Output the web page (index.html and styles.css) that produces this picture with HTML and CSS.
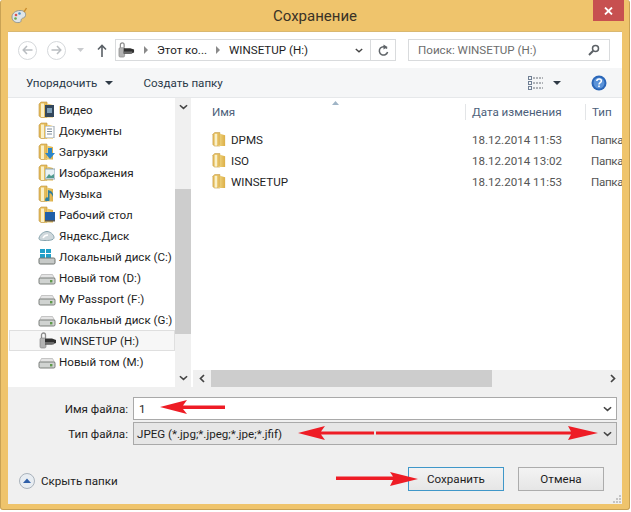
FILE: index.html
```html
<!DOCTYPE html>
<html lang="ru">
<head>
<meta charset="utf-8">
<title>Сохранение</title>
<link rel="stylesheet" href="styles.css">
</head>
<body>
<svg class="defs" width="0" height="0" aria-hidden="true">
  <defs>
    <linearGradient id="fg" x1="0" y1="0" x2="1" y2="0"><stop offset="0" stop-color="#f3dc8c"/><stop offset="1" stop-color="#dcae45"/></linearGradient>
    <symbol id="folder" viewBox="0 0 16 18">
      <path d="M1 3 3 1h6v15.500H3L1 15z" fill="#e5bd5c" stroke="#bf9642" stroke-width=".6"/>
      <path d="M9 2.500 15 4v12.500H6.500L9 15z" fill="url(#fg)"/>
      <path d="M4.500 2.500v13.500" stroke="#faf0c8" stroke-width="3"/>
    </symbol>
    <symbol id="hdd" viewBox="0 0 18 12">
      <path d="M3.500 1.500h11L17 6H1z" fill="#e4e4e4" stroke="#a8a8a8" stroke-width=".6"/>
      <rect x="1" y="5" width="16" height="6" rx="1.200" fill="#d0d3d1" stroke="#6f7471" stroke-width=".9"/>
      <rect x="12" y="7" width="2.400" height="2.400" fill="#5d9a4a"/>
    </symbol>
    <symbol id="usb" viewBox="0 0 18 18">
      <path d="M2.500 6V3a2 2 0 0 1 4 0v3" fill="none" stroke="#8c8c8c" stroke-width="1.300"/>
      <rect x="1" y="6" width="6" height="10" rx="1.400" fill="#b3b3b3" stroke="#7d7d7d" stroke-width=".6"/>
      <path d="M6 6.500h7l4 1.500v3l-4 1.500H6z" fill="#2f2f2f"/>
      <rect x="6" y="10" width="9" height="2.400" fill="#6b6b6b"/>
    </symbol>
    <symbol id="chev" viewBox="0 0 10 6">
      <path d="M1 1l4 3.600L9 1" fill="none" stroke="#444" stroke-width="1.700"/>
    </symbol>
  </defs>
</svg>

<div class="window">
  <header class="titlebar">
    <svg class="app-icon" width="18" height="18" viewBox="0 0 18 18">
      <path d="M2 10c0-4 4-6.500 8-6.500s6 2 5.500 5-3 2-4 3.500.5 3-2.500 3.500S2 14.500 2 10z" fill="#dfe5e8" stroke="#7f8a8e" stroke-width=".8"/>
      <circle cx="6" cy="8" r="1.300" fill="#d9534f"/><circle cx="9.500" cy="6.500" r="1.300" fill="#4a90c9"/><circle cx="5.500" cy="11.500" r="1.300" fill="#6aa84f"/>
      <path d="M14 5l2.500-4" stroke="#c98a2b" stroke-width="1.400"/>
    </svg>
    <span class="title-text">Сохранение</span>
    <button class="close" type="button" aria-label="Закрыть">
      <svg width="9" height="8" viewBox="0 0 9 8"><path d="M1 .5l7 7M8 .5l-7 7" stroke="#fff" stroke-width="1.800"/></svg>
    </button>
  </header>

  <div class="client">
    <div class="addressbar">
      <span class="nav-circle"><svg width="11" height="10" viewBox="0 0 11 10"><path d="M10.500 5H1.500M5 1 1.200 5 5 9" fill="none" stroke="#b9bdc1" stroke-width="1.500"/></svg></span>
      <span class="nav-circle next"><svg width="11" height="10" viewBox="0 0 11 10"><path d="M.5 5h9M6 1l3.800 4L6 9" fill="none" stroke="#b9bdc1" stroke-width="1.500"/></svg></span>
      <svg class="nav-drop" width="7" height="4" viewBox="0 0 7 4"><path d="M0 0h7L3.500 4z" fill="#c9cbce"/></svg>
      <svg class="nav-up" width="10" height="13" viewBox="0 0 10 13"><path d="M5 13V2M1 5.500 5 1.500l4 4" fill="none" stroke="#5a6066" stroke-width="1.600"/></svg>
      <div class="address">
        <svg class="crumb-icon" width="17" height="17"><use href="#usb"/></svg>
        <span class="crumb-arrow"></span>
        <span class="crumb">Этот ко...</span>
        <span class="crumb-arrow"></span>
        <span class="crumb">WINSETUP (H:)</span>
        <span class="grow"></span>
        <svg class="addr-chev" width="8" height="5"><use href="#chev"/></svg>
        <span class="refresh">
          <svg width="11" height="13" viewBox="0 0 11 13"><path d="M9 4.500A4.200 4.200 0 1 0 9.600 8" fill="none" stroke="#5f6468" stroke-width="1.500"/><path d="M5.500 0.500v5l4-2.500z" fill="#5f6468"/></svg>
        </span>
      </div>
      <div class="search">
        <span class="search-text">Поиск: WINSETUP (H:)</span>
        <svg width="12" height="12" viewBox="0 0 12 12"><circle cx="7.500" cy="4.500" r="3" fill="none" stroke="#5c6166" stroke-width="1.500"/><path d="M5.200 6.800 1 11" stroke="#5c6166" stroke-width="2"/></svg>
      </div>
    </div>

    <div class="toolbar">
      <span class="tool">Упорядочить</span>
      <span class="caret tool-caret"></span>
      <span class="tool create">Создать папку</span>
      <span class="grow"></span>
      <svg class="view-icon" width="15" height="14" viewBox="0 0 15 14">
        <g fill="none" stroke="#6f7f94"><rect x=".5" y=".5" width="3" height="3"/><rect x=".5" y="5.500" width="3" height="3"/><rect x=".5" y="10.500" width="3" height="3"/></g>
        <path d="M5 2h10M5 7h10M5 12h10" stroke="#6a7078" stroke-dasharray="2 1"/>
      </svg>
      <span class="caret view-caret"></span>
      <svg class="help" width="16" height="16" viewBox="0 0 16 16">
        <circle cx="8" cy="8" r="7.500" fill="#2a66b8"/><circle cx="8" cy="8" r="5.500" fill="#5b93d9"/>
        <path d="M5.800 6c.2-2.600 4.600-2.600 4.600 0 0 1.700-2.400 1.700-2.400 3.500" fill="none" stroke="#fff" stroke-width="1.500"/><rect x="7.200" y="10.500" width="1.600" height="1.600" fill="#fff"/>
      </svg>
    </div>

    <div class="main">
      <nav class="tree">
        <div class="tree-list">
          <div class="tree-row"><span class="tree-icon"><svg width="16" height="18"><use href="#folder"/></svg><svg class="badge" width="10" height="12" viewBox="0 0 10 12"><rect width="9" height="12" fill="#33475c"/><rect x="2" y="3" width="5" height="5" fill="#7fa0b8"/></svg></span>Видео</div>
          <div class="tree-row"><span class="tree-icon"><svg width="16" height="18"><use href="#folder"/></svg><svg class="badge" width="10" height="12" viewBox="0 0 10 12"><rect width="9" height="12" fill="#fff" stroke="#98a4ad"/><path d="M2 3h5M2 5.500h5M2 8h5" stroke="#7a8a98"/></svg></span>Документы</div>
          <div class="tree-row"><span class="tree-icon"><svg width="16" height="18"><use href="#folder"/></svg><svg class="badge" width="10" height="12" viewBox="0 0 10 12"><path d="M3 1h4v5h3l-5 6-5-6h3z" fill="#2c86c9"/></svg></span>Загрузки</div>
          <div class="tree-row"><span class="tree-icon"><svg width="16" height="18"><use href="#folder"/></svg><svg class="badge" width="10" height="12" viewBox="0 0 10 12"><rect y="1" width="10" height="10" fill="#e9f2f6" stroke="#8fa6b4"/><path d="M1 10 4 6l2 2 3-2v4z" fill="#4f9a8f"/></svg></span>Изображения</div>
          <div class="tree-row"><span class="tree-icon"><svg width="16" height="18"><use href="#folder"/></svg><svg class="badge" width="10" height="12" viewBox="0 0 10 12"><path d="M3 1v7.500a2.200 2.200 0 1 0 1.500 2V4c2 .5 3 2 3 4 1.500-3 0-6-4.500-7z" fill="#2f7fa0"/></svg></span>Музыка</div>
          <div class="tree-row"><span class="tree-icon"><svg width="16" height="18"><use href="#folder"/></svg><svg class="badge" width="10" height="12" viewBox="0 0 10 12"><rect y="2" width="10" height="8" fill="#1f5fa8"/><rect y="10" width="10" height="1.500" fill="#555"/></svg></span>Рабочий стол</div>
          <div class="tree-row"><span class="tree-icon"><svg width="17" height="12" viewBox="0 0 17 12"><path d="M1 8c1-4 5-6.500 8-6.500s7 3 7 6-6 3-9 3-6.500 0-6-2.500z" fill="#cfd8dc" stroke="#87a3ad"/><path d="M5 8c1-2 3-3 5-3" stroke="#fff" stroke-width="1.500" fill="none"/></svg></span>Яндекс.Диск</div>
          <div class="tree-row"><span class="tree-icon"><svg class="win" width="18" height="17" viewBox="0 0 18 17"><path d="M2 1h5v4H2zM8 1h5v4H8zM2 6h5v4H2zM8 6h5v4H8z" fill="#21a0c9"/><rect x="1" y="10" width="16" height="6" rx="1.200" fill="#c7cac8" stroke="#6f7471"/></svg></span>Локальный диск (C:)</div>
          <div class="tree-row"><span class="tree-icon"><svg class="hdd" width="18" height="12"><use href="#hdd"/></svg></span>Новый том (D:)</div>
          <div class="tree-row"><span class="tree-icon"><svg class="hdd" width="18" height="12"><use href="#hdd"/></svg></span>My Passport (F:)</div>
          <div class="tree-row"><span class="tree-icon"><svg class="hdd" width="18" height="12"><use href="#hdd"/></svg></span>Локальный диск (G:)</div>
          <div class="tree-row selected"><span class="tree-icon"><svg width="18" height="18"><use href="#usb"/></svg></span>WINSETUP (H:)</div>
          <div class="tree-row"><span class="tree-icon"><svg class="hdd" width="18" height="12"><use href="#hdd"/></svg></span>Новый том (M:)</div>
        </div>
      </nav>
      <div class="vscroll">
        <svg class="sb-up" width="9" height="6"><use href="#chev"/></svg>
        <div class="vthumb"></div>
        <span class="grow"></span>
        <svg width="9" height="6"><use href="#chev"/></svg>
      </div>
      <section class="files">
        <div class="file-head">
          <span class="col-name">Имя</span>
          <span class="col-date">Дата изменения</span>
          <span class="col-type">Тип</span>
          <svg class="sort" width="7" height="4" viewBox="0 0 7 4"><path d="M0 4 3.500 0 7 4z" fill="#9fb4c6"/></svg>
        </div>
        <div class="file-list">
          <div class="file-row"><span class="col-name"><svg width="14" height="17"><use href="#folder"/></svg>DPMS</span><span class="col-date">18.12.2014 11:53</span><span class="col-type">Папка</span></div>
          <div class="file-row"><span class="col-name"><svg width="14" height="17"><use href="#folder"/></svg>ISO</span><span class="col-date">18.12.2014 13:02</span><span class="col-type">Папка</span></div>
          <div class="file-row"><span class="col-name"><svg width="14" height="17"><use href="#folder"/></svg>WINSETUP</span><span class="col-date">18.12.2014 11:53</span><span class="col-type">Папка</span></div>
        </div>
        <div class="hscroll">
          <svg class="h-left" width="6" height="9" viewBox="0 0 6 9"><path d="M5 1 1.500 4.500 5 8" fill="none" stroke="#444" stroke-width="1.700"/></svg>
          <div class="hthumb"></div>
          <span class="grow"></span>
          <svg class="h-right" width="6" height="9" viewBox="0 0 6 9"><path d="M1 1l3.500 3.500L1 8" fill="none" stroke="#444" stroke-width="1.700"/></svg>
        </div>
      </section>
    </div>

    <div class="form">
      <div class="form-row">
        <label class="form-label">Имя файла:</label>
        <div class="field"><span>1</span><svg width="9" height="6"><use href="#chev"/></svg></div>
      </div>
      <div class="form-row type-row">
        <label class="form-label">Тип файла:</label>
        <div class="field select"><span>JPEG (*.jpg;*.jpeg;*.jpe;*.jfif)</span><svg width="9" height="6"><use href="#chev"/></svg></div>
      </div>
      <div class="actions">
        <span class="toggle"><svg width="16" height="16" viewBox="0 0 16 16"><circle cx="8" cy="8" r="7.500" fill="#e8edf2" stroke="#a9b2bb"/><path d="M4 10 8 5.500 12 10z" fill="#2f5fa8"/></svg>Скрыть папки</span>
        <span class="grow"></span>
        <button class="btn primary" type="button">Сохранить</button>
        <button class="btn" type="button">Отмена</button>
      </div>
    </div>
  </div>

  <svg class="grip" width="10" height="9" viewBox="0 0 10 9" aria-hidden="true">
    <path d="M7 0h2v2H7zM4 3h2v2H4zM7 3h2v2H7zM1 6h2v2H1zM4 6h2v2H4zM7 6h2v2H7z" fill="#c4c4c4"/>
  </svg>

  <svg class="arrows" width="631" height="512" viewBox="0 0 631 512" aria-hidden="true">
    <g fill="#ee1c25">
      <path d="M160 407 187 400 183 405.500H225V409H183L187 414z"/>
      <path d="M298 433 325 426 321 431.500H374V434.500H321L325 440z"/>
      <path d="M376 431.500H571L568 426 598 433 568 440 571 434.500H376z"/>
      <path d="M336 476.500H393L390 472 418 479 390 486 393 480H336z"/>
    </g>
  </svg>
</div>
</body>
</html>
```
FILE: styles.css
```css
* { box-sizing: border-box; }
html, body { margin: 0; padding: 0; background: #fff; }
body { width: 631px; height: 512px; overflow: hidden; font: 11.6px/16px Roboto, "Open Sans", sans-serif; color: #1e1e1e; }
.defs { position: absolute; }
.grow { flex: 1; }

.window { position: relative; width: 630px; height: 510px; background: #efc46c; border: 1px solid #c9a254; border-top: 0; border-radius: 3px; padding: 0 7px 5px; display: flex; flex-direction: column; }
.titlebar { height: 31px; flex: none; display: flex; align-items: center; justify-content: center; position: relative; }
.title-text { font-size: 15px; color: #3a3226; margin-top: 1px; }
.app-icon { position: absolute; left: 2px; top: 7px; }
.close { position: absolute; right: -2px; top: 0; width: 31px; height: 21px; border: 0; padding: 0; background: #c75050; display: flex; align-items: center; justify-content: center; }

.client { flex: 1; background: #f0f0f0; display: flex; flex-direction: column; min-height: 0; border: 1px solid #d9b871; border-width: 1px 0 0 0; }

.addressbar { height: 36px; flex: none; background: #fff; display: flex; align-items: center; padding-left: 10px; }
.nav-circle { width: 19px; height: 19px; border: 1px solid #d5d8db; border-radius: 50%; display: flex; align-items: center; justify-content: center; }
.nav-circle.next { margin-left: 10px; }
.nav-drop { margin-left: 11px; }
.nav-up { margin-left: 13px; }
.address { width: 281px; height: 22px; margin-left: 8px; border: 1px solid #d9dbdd; display: flex; align-items: center; padding-left: 2px; }
.crumb-icon { flex: none; }
.crumb-arrow { width: 0; height: 0; border-left: 4px solid #8a8a8a; border-top: 4px solid transparent; border-bottom: 4px solid transparent; margin: 0 9px; }
.crumb { white-space: nowrap; }
.addr-chev { margin-right: 7px; }
.refresh { width: 25px; height: 20px; border-left: 1px solid #d9dbdd; display: flex; align-items: center; justify-content: center; }
.search { width: 202px; height: 22px; margin-left: 12px; border: 1px solid #d9dbdd; display: flex; align-items: center; justify-content: space-between; padding: 0 9px; color: #6d6d6d; }

.toolbar { height: 30px; flex: none; background: #f5f6f7; border-bottom: 1px solid #e6e8ea; display: flex; align-items: center; padding-left: 18px; color: #2b3a4a; }
.caret { width: 0; height: 0; border-left: 4px solid transparent; border-right: 4px solid transparent; border-top: 4px solid #2f3a46; }
.tool-caret { margin-left: 8px; }
.create { margin-left: 30px; }
.view-icon { margin-right: 10px; }
.view-caret { margin-right: 30px; }
.help { margin-right: 15px; }

.main { height: 289px; flex: none; display: flex; background: #fff; }
.tree { width: 167px; flex: none; background: #fff; padding-top: 1px; }
.tree-row { height: 21px; display: flex; align-items: center; white-space: nowrap; padding-left: 51px; position: relative; }
.tree-icon { position: absolute; left: 30px; top: 0; width: 18px; height: 21px; display: flex; align-items: center; }
.hdd { margin-top: 3px; }
.badge { position: absolute; left: 7px; top: 6px; }
.selected { margin-left: 1px; padding-left: 50px; border: 1px solid #dfdfdf; background: #f7f7f7; }
.selected .tree-icon { left: 29px; top: -1px; }
.vscroll { width: 16px; flex: none; background: #f0f0f0; display: flex; flex-direction: column; align-items: center; padding: 6px 0; }
.vthumb { width: 16px; height: 145px; margin-top: 79px; background: #cdcdcd; }

.files { flex: 1; min-width: 0; display: flex; flex-direction: column; overflow: hidden; position: relative; }
.file-head { height: 22px; flex: none; display: flex; align-items: flex-end; color: #4c607a; position: relative; }
.file-head .col-date { border-left: 1px solid #e3e5e7; }
.file-head .col-type { border-left: 1px solid #e3e5e7; }
.col-name { width: 274px; flex: none; padding-left: 21px; display: flex; align-items: center; gap: 5px; white-space: nowrap; }
.col-date { width: 120px; flex: none; padding-left: 6px; white-space: nowrap; }
.col-type { flex: 1; padding-left: 6px; white-space: nowrap; }
.sort { position: absolute; left: 141px; top: 3px; }
.file-list { flex: 1; padding-top: 9px; }
.file-row { height: 21px; display: flex; align-items: center; }
.file-row .col-date { padding-left: 7px; color: #555; }
.file-row .col-type { padding-left: 6px; color: #555; letter-spacing: -.3px; }
.hscroll { height: 17px; flex: none; margin-left: 2px; background: #f0f0f0; display: flex; align-items: center; padding-right: 6px; }
.h-left { margin-left: 6px; }
.hthumb { width: 281px; height: 17px; margin-left: 6px; background: #cdcdcd; }

.form { flex: 1; padding: 10px 5px 0 0; background: #f0f0f0; display: flex; flex-direction: column; }
.form-row { display: flex; align-items: center; height: 23px; }
.type-row { margin-top: 2px; }
.form-label { width: 120px; text-align: right; flex: none; color: #222; }
.field { margin-left: 5px; flex: 1; height: 23px; background: #fff; border: 1px solid #a9a9a9; display: flex; align-items: center; justify-content: space-between; padding: 0 4px 0 5px; }
.select { background: #e6e6e6; }
.select span { margin-left: -2px; }
.actions { display: flex; align-items: center; margin-top: 22px; padding-right: 13px; }
.toggle { display: flex; align-items: center; gap: 6px; margin: 3px 0 0 11px; color: #222; }
.btn { width: 86px; height: 24px; padding: 0; font: inherit; color: #1e1e1e; border: 1px solid #acacac; background: linear-gradient(#f3f3f3, #e6e6e6); margin-left: 14px; }
.primary { width: 96px; border-color: #3f97c9; }

.grip { position: absolute; left: 611px; top: 495px; }
.arrows { position: absolute; left: -1px; top: 0; pointer-events: none; }
```
